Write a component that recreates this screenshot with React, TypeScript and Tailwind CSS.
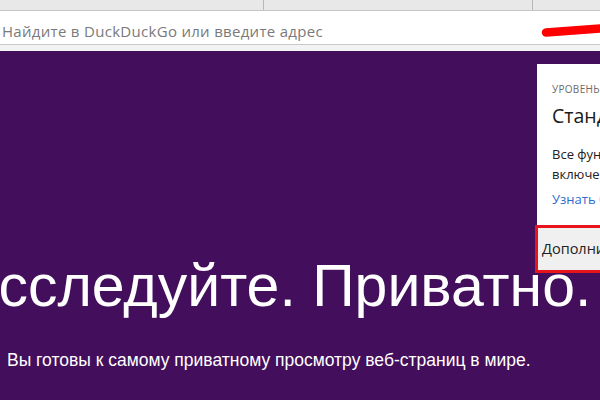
import React from 'react';

const ui = "font-['Open_Sans','Noto_Sans',sans-serif]";
const arial = "font-['Liberation_Sans',Arial,sans-serif]";

export const App: React.FC = () => {
  return (
    <div className="relative w-[600px] h-[400px] overflow-hidden bg-[#430e5b]">
      {/* tab strip */}
      <div className="flex h-[11px] bg-[#e8e8e8] border-b border-[#c4c4c4]">
        <div className="w-[264px] border-r border-[#b8b8b8]" />
        <div className="w-[269px] border-r border-[#b8b8b8]" />
        <div className="flex-1" />
      </div>

      {/* address bar */}
      <div className="relative flex items-center h-[34px] pt-[7px] bg-white border-b border-[#c8c8c8]">
        <span className={`${ui} pl-[2px] text-[15px] text-[#7a7a7a] tracking-[0.3px] whitespace-nowrap`}>
          Найдите в DuckDuckGo или введите адрес
        </span>
        <svg className="absolute left-[541px] top-[12px]" width="60" height="14" viewBox="0 0 60 14">
          <path d="M5 9.5 C 18 8.5, 40 7, 60 5.5" stroke="#ff0000" strokeWidth="8.5" strokeLinecap="round" fill="none" />
        </svg>
      </div>
      <div className="h-[6px] bg-[#f3f3f3]" />

      {/* page */}
      <main className="flex flex-col pt-[200px]">
        <h1 className={`${arial} ml-[-44px] text-[59px] leading-[70px] text-white whitespace-nowrap`}>
          Исследуйте. Приватно.
        </h1>
        <p className={`${arial} ml-[7px] mt-[26px] text-[17.5px] text-white whitespace-nowrap`}>
          Вы готовы к самому приватному просмотру веб-страниц в мире.
        </p>
      </main>

      {/* protection panel */}
      <div className={`${ui} absolute left-[535px] top-[64px] w-[300px] flex flex-col`}>
        <div className="ml-[2px] bg-white pl-[15px] pt-[18px] h-[161px]">
          <div className="text-[10px] text-[#6b6b6b] tracking-[0.3px] uppercase">Уровень защиты</div>
          <div className="mt-[5px] text-[19.5px] text-[#1a1a1a] leading-[28px]">Стандартный</div>
          <div className="mt-[14px] text-[13px] leading-[20px] text-[#222]">
            Все функции защиты
            <br />
            включены
          </div>
          <div className="mt-[6px] text-[13px] text-[#2f6bd0]">Узнать больше</div>
        </div>
        <div className="h-[48px] flex items-center bg-[#f0f0f0] border-[3px] border-[#e8141c] pl-[4px] text-[14.5px] text-[#222]">
          Дополнительно
        </div>
      </div>
    </div>
  );
};

export default App;
